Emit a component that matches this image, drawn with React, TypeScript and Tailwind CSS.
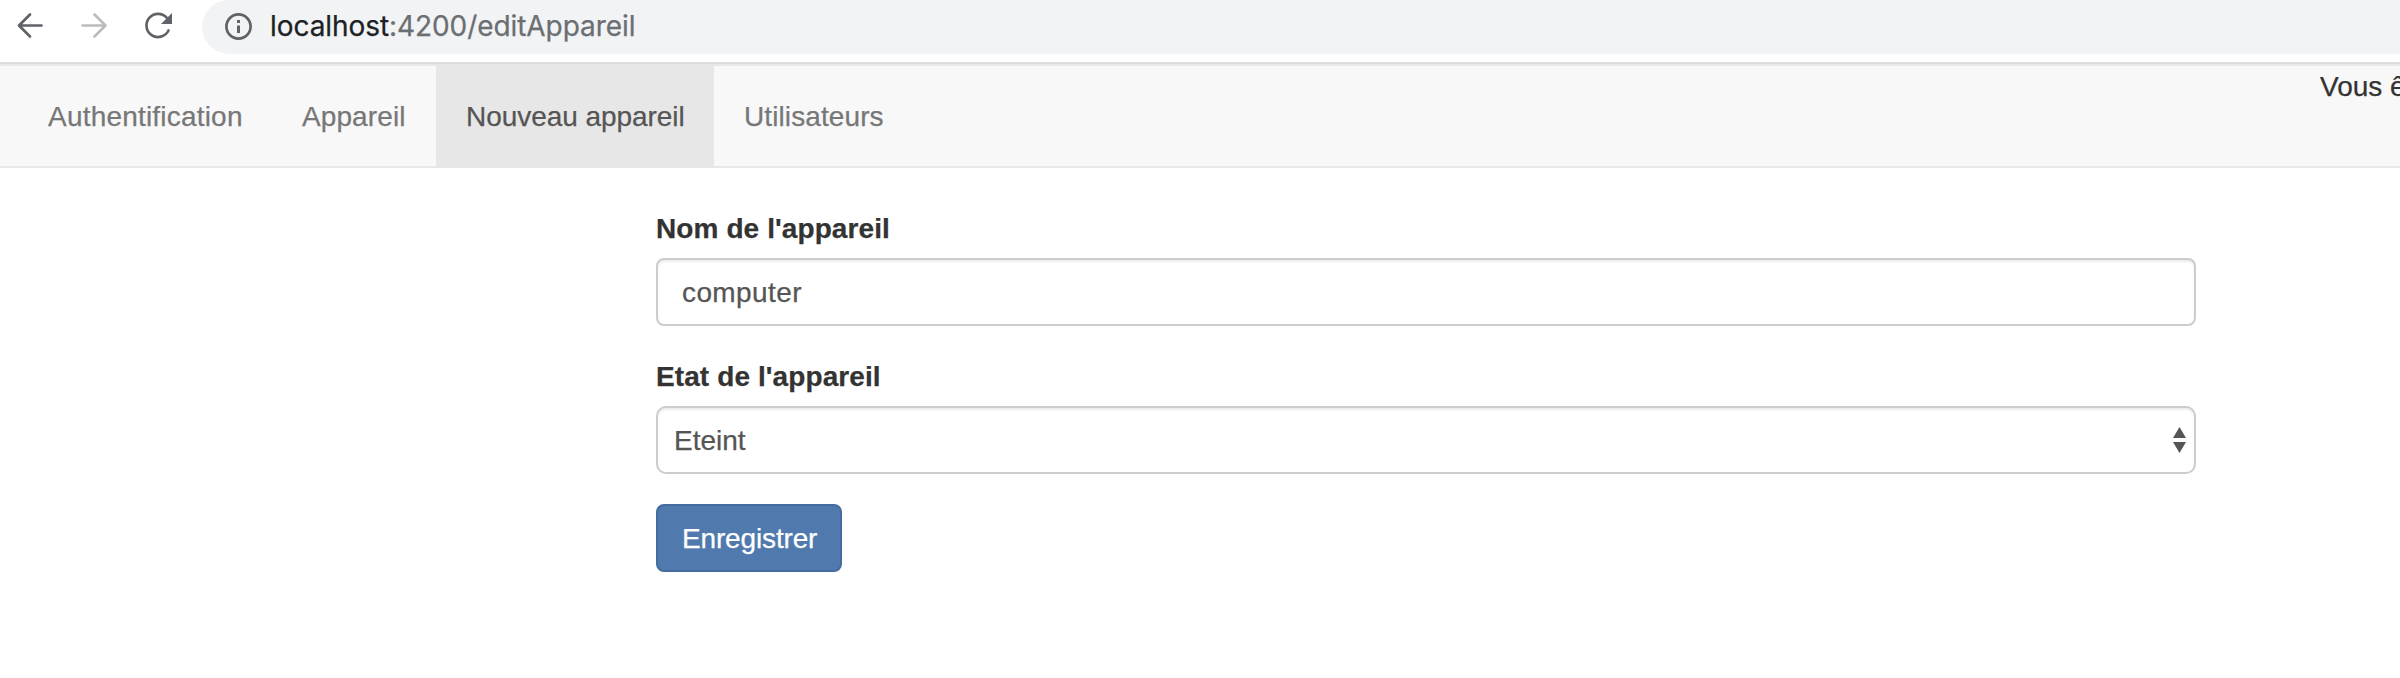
import React from "react";

const links = [
  { label: "Authentification", box: "w-[254px]", text: "tracking-[0.2px] text-[#777]" },
  { label: "Appareil", box: "w-[164px]", text: "tracking-[0.1px] text-[#777]" },
  { label: "Nouveau appareil", box: "w-[278px] bg-[#e7e7e7]", text: "tracking-[-0.05px] text-[#555]" },
  { label: "Utilisateurs", box: "w-[200px]", text: "tracking-[0.1px] text-[#777]" },
];

function Toolbar() {
  return (
    <div className="flex h-16 w-full items-start border-b-2 border-[#dadce0] bg-white">
      <svg className="h-[54px] w-[202px] shrink-0" viewBox="0 0 202 54" fill="none" strokeWidth="2.7" strokeLinecap="round" strokeLinejoin="round">
        <path d="M41.5 25.5H19M30 14.5l-11 11 11 11" stroke="#5f6368" />
        <path d="M82.5 25.5H105M94.5 14.5l11 11-11 11" stroke="#babcbe" />
        <path d="M168.5 30.5A11.6 11.6 0 1 1 167 18" stroke="#5f6368" />
        <path d="M172 13v11h-11z" fill="#5f6368" />
      </svg>
      <div className="flex h-[54px] flex-1 items-start rounded-l-[27px] bg-[#f1f3f4]">
        <svg className="ml-[23px] mt-[13px] h-[27px] w-[27px] shrink-0" viewBox="0 0 27 27" fill="none">
          <circle cx="13.5" cy="13.5" r="12.1" stroke="#5f6368" strokeWidth="2.7" />
          <path d="M12 7h3v3h-3zM12 12.5h3V20h-3z" fill="#5f6368" />
        </svg>
        <span className="ml-[18px] mt-[6px] whitespace-nowrap font-['Inter',sans-serif] text-[28px] leading-[40px] tracking-[-0.07px] text-[#6b6e72]">
          <span className="text-[#202124]">localhost</span>:4200/editAppareil
        </span>
      </div>
    </div>
  );
}

export default function App() {
  return (
    <div className="h-[678px] w-full overflow-hidden bg-white font-['Liberation_Sans',Arial,sans-serif] text-[28px] leading-[40px] text-[#333] [-webkit-text-stroke-width:0.25px]">
      <Toolbar />
      <nav className="flex h-[104px] border-y-2 border-[#e7e7e7] bg-[#f8f8f8] pl-[18px]">
        {links.map((l) => (
          <a key={l.label} className={`block shrink-0 whitespace-nowrap pb-[29px] pl-[30px] pt-[31px] ${l.box} ${l.text}`}>
            {l.label}
          </a>
        ))}
        <div className="ml-auto w-[80px] overflow-hidden whitespace-nowrap pt-px">Vous êtes</div>
      </nav>
      <form className="ml-[656px] flex w-[1540px] flex-col items-start pt-[41px]">
        <label className="mb-[9px] whitespace-nowrap font-bold tracking-[0.1px]">Nom de l'appareil</label>
        <div className="flex h-[68px] w-full items-center rounded-[8px] border-2 border-[#ccc] pl-6 pt-0.5 tracking-[0.4px] text-[#555] shadow-[inset_0_2px_2px_rgba(0,0,0,0.075)]">
          computer
        </div>
        <label className="mb-[9px] mt-[31px] whitespace-nowrap font-bold tracking-[0.1px]">Etat de l'appareil</label>
        <div className="flex h-[68px] w-full items-center justify-between rounded-[10px] border-2 border-[#ccc] pl-4 pr-2 text-[#555] shadow-[inset_0_2px_2px_rgba(0,0,0,0.075)]">
          <span className="pt-0.5">Eteint</span>
          <svg className="h-[26px] w-[13px]" viewBox="0 0 13 26" fill="#555">
            <path d="M6.5 0L13 11H0zM0 15h13L6.5 26z" />
          </svg>
        </div>
        <button type="button" className="mt-[30px] flex h-[68px] w-[186px] items-center whitespace-nowrap rounded-[8px] border-2 border-[#456c9f] bg-[#5079ae] pl-6 pt-0.5 tracking-[-0.15px] text-white">
          Enregistrer
        </button>
      </form>
    </div>
  );
}
